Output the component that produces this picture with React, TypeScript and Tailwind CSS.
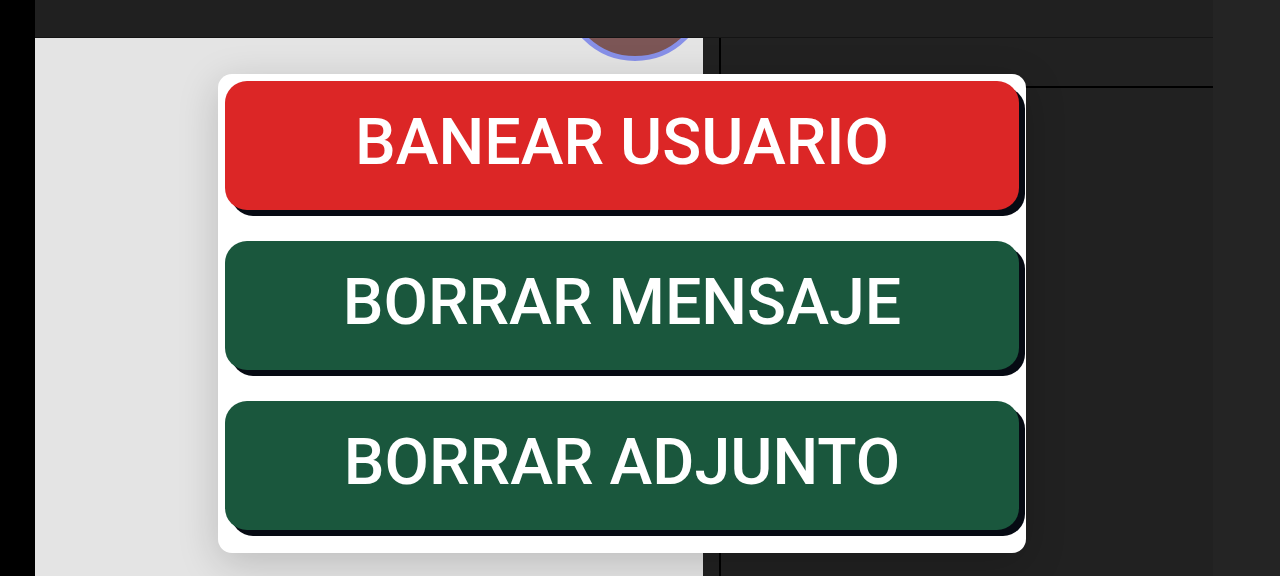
const actions = [
  { label: "BANEAR USUARIO", color: "bg-[#dc2626]" },
  { label: "BORRAR MENSAJE", color: "bg-[#1a573d]" },
  { label: "BORRAR ADJUNTO", color: "bg-[#1a573d]" },
];

export default function App() {
  return (
    <div className="relative flex h-[576px] w-[1280px] overflow-hidden font-['Roboto',sans-serif]">
      <div className="w-[35px] shrink-0 bg-black" />

      <div className="flex w-[1178px] shrink-0 flex-col">
        <div className="h-[38px] shrink-0 border-b border-[#141414] bg-[#202020]" />
        <div className="flex flex-1">
          <div className="relative w-[668px] shrink-0 overflow-hidden bg-[#e4e4e4]">
            <div className="absolute left-[527px] top-[-123px] h-[146px] w-[146px] rounded-full border-[5px] border-[#8790e8] bg-[#7c5656]" />
          </div>
          <div className="flex flex-1 bg-[#212121]">
            <div className="w-[18px] shrink-0 border-r-2 border-black" />
            <div className="flex-1">
              <div className="h-[50px] border-b-2 border-black" />
            </div>
          </div>
        </div>
      </div>

      <div className="flex-1 bg-[#242424]" />

      <div className="absolute left-[218px] top-[74px] flex w-[808px] flex-col gap-[31px] rounded-[14px] bg-white px-[7px] pb-[23px] pt-[7px] shadow-[0_10px_40px_rgba(0,0,0,0.18)]">
        {actions.map((a) => (
          <button
            key={a.label}
            className={`${a.color} flex h-[129px] items-center justify-center rounded-[22px] pb-[6px] text-[64.5px] font-medium leading-none text-white shadow-[6px_6px_0_#060a13]`}
          >
            {a.label}
          </button>
        ))}
      </div>
    </div>
  );
}
